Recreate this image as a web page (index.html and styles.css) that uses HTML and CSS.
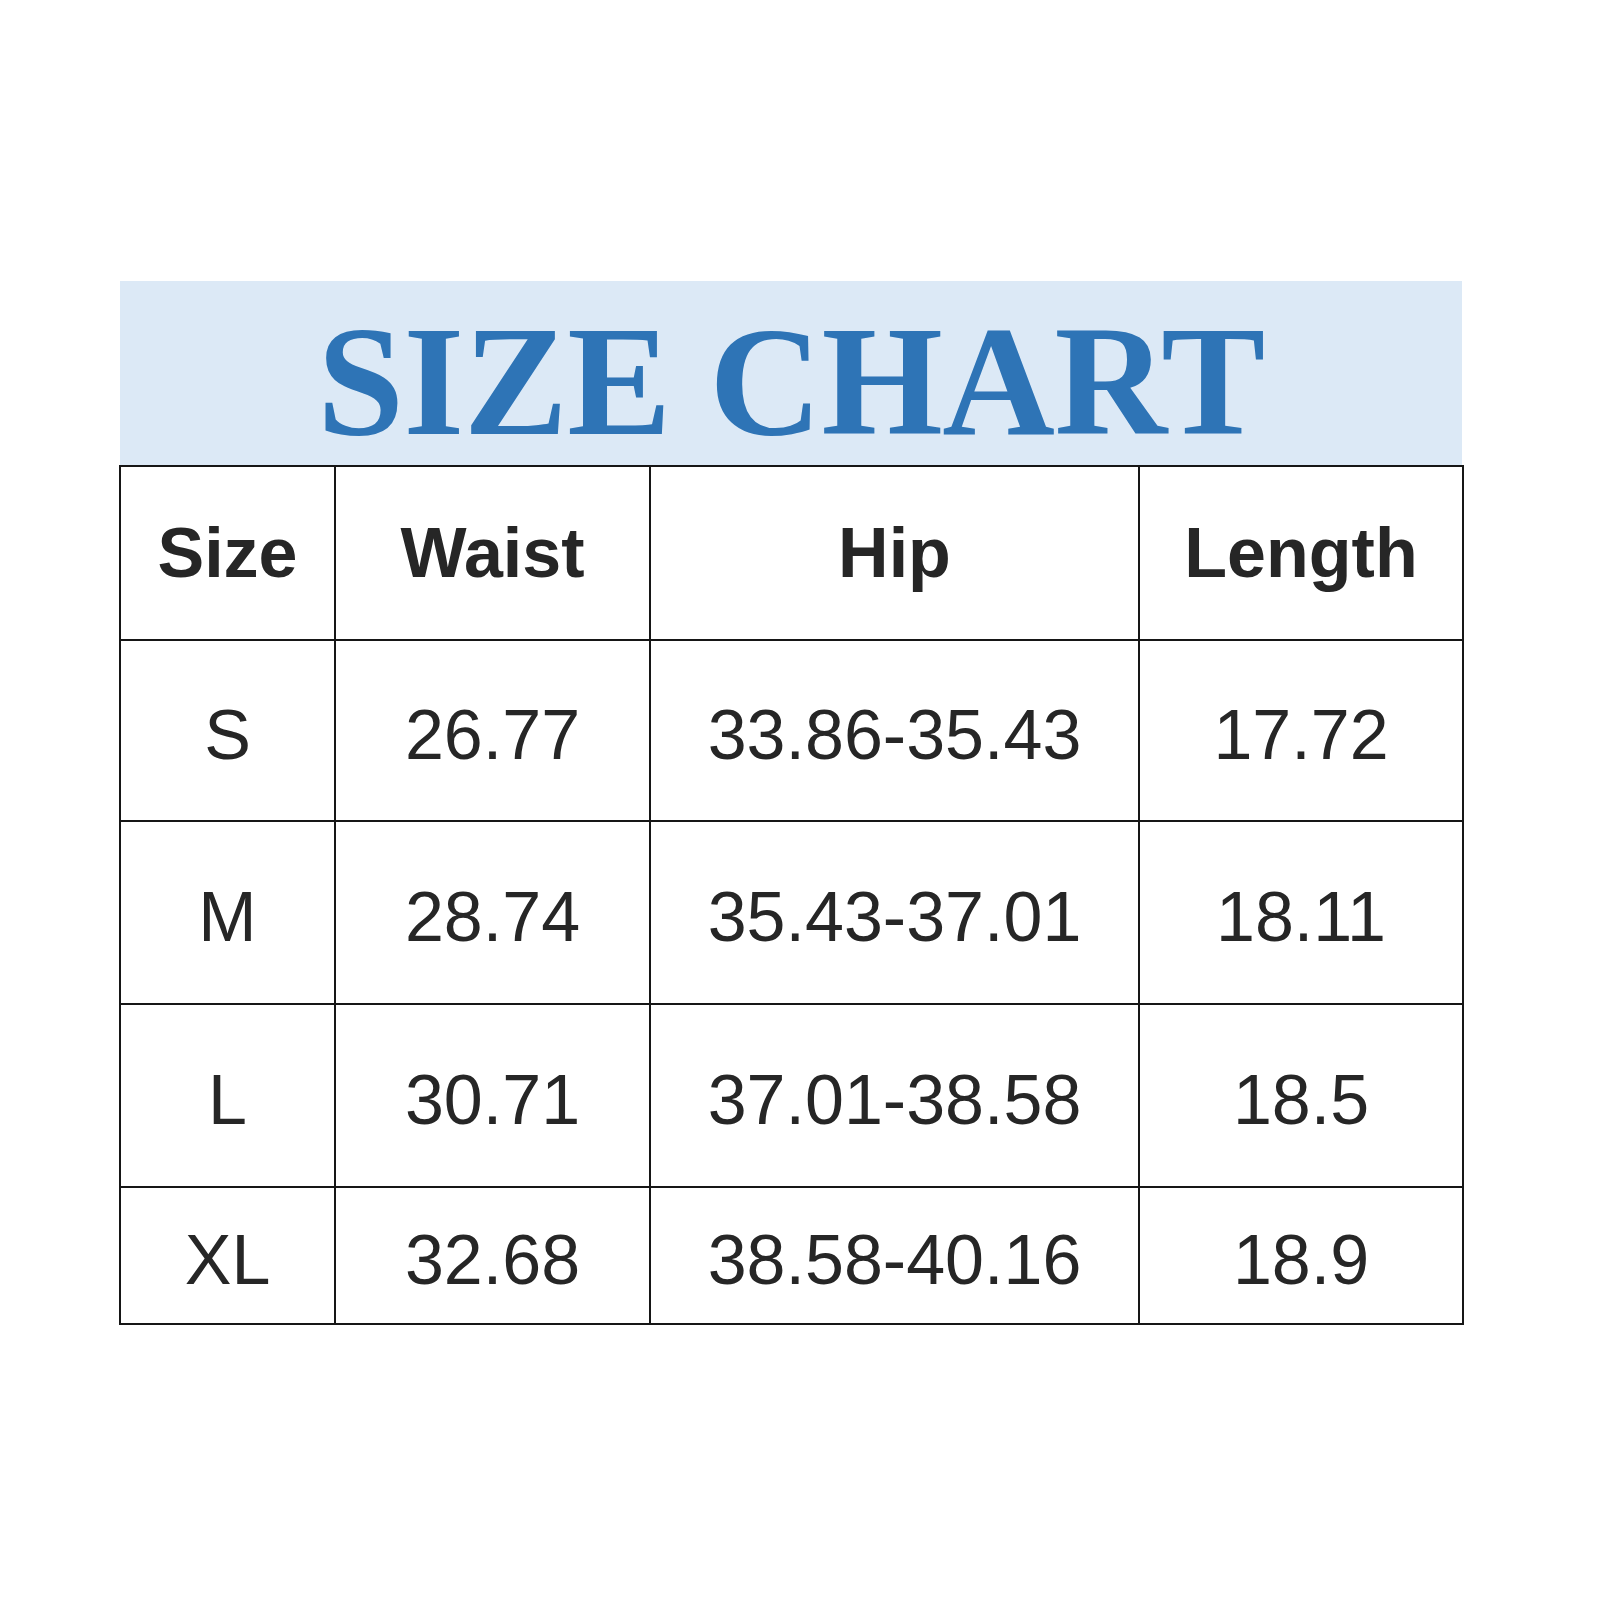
FILE: index.html
```html
<!DOCTYPE html>
<html>
<head>
<meta charset="utf-8">
<link rel="stylesheet" href="styles.css">
</head>
<body>
<div class="chart">
  <div class="banner"><h1 class="title">SIZE CHART</h1></div>
  <table class="sizes">
    <colgroup>
      <col class="c-size"><col class="c-waist"><col class="c-hip"><col class="c-length">
    </colgroup>
    <thead>
      <tr class="r-head"><th>Size</th><th>Waist</th><th>Hip</th><th>Length</th></tr>
    </thead>
    <tbody>
      <tr class="r-a"><td>S</td><td>26.77</td><td>33.86-35.43</td><td>17.72</td></tr>
      <tr class="r-b"><td>M</td><td>28.74</td><td>35.43-37.01</td><td>18.11</td></tr>
      <tr class="r-b"><td>L</td><td>30.71</td><td>37.01-38.58</td><td>18.5</td></tr>
      <tr class="r-last"><td>XL</td><td>32.68</td><td>38.58-40.16</td><td>18.9</td></tr>
    </tbody>
  </table>
</div>
</body>
</html>
```

FILE: styles.css
```css
html, body {
  margin: 0;
  padding: 0;
  background: #ffffff;
}

.chart {
  width: 1342px;
  margin: 281px 0 0 120px;
}

.banner {
  height: 184px;
  background: #dce9f6;
  display: flex;
  align-items: center;
  justify-content: center;
}

.title {
  margin: 18px 0 0 0;
  font-family: "Liberation Serif", "Times New Roman", serif;
  font-weight: bold;
  font-size: 156px;
  line-height: 1;
  color: #2e74b6;
  letter-spacing: -0.5px;
}

.sizes {
  width: 1343px;
  margin-left: -1px;
  border-collapse: collapse;
  table-layout: fixed;
  font-family: "Liberation Sans", Arial, sans-serif;
  color: #262626;
  font-size: 70px;
}

.c-size { width: 215px; }
.c-waist { width: 315px; }
.c-hip { width: 489px; }
.c-length { width: 324px; }

.sizes th,
.sizes td {
  border: 2px solid #161616;
  padding: 0;
  text-align: center;
  vertical-align: middle;
  line-height: 1;
}

.sizes th {
  font-weight: bold;
}

.sizes td {
  font-weight: normal;
  padding-top: 8px;
}

.r-head { height: 174px; }
.r-a { height: 181px; }
.r-b { height: 183px; }
.r-last { height: 137px; }
```
